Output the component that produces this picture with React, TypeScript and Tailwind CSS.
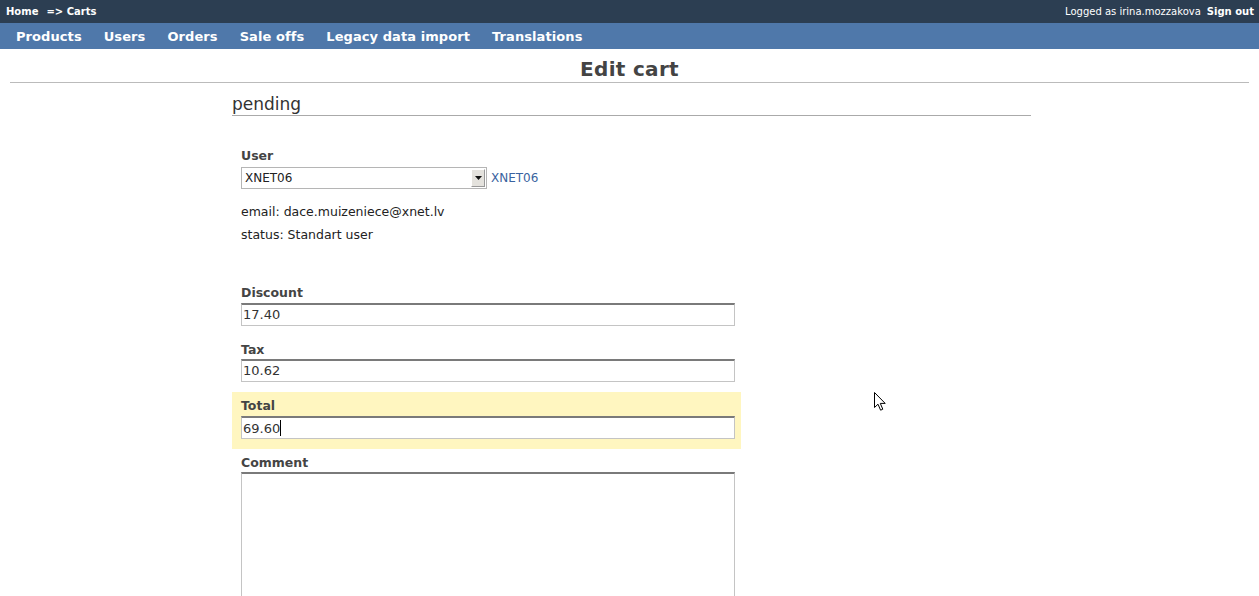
import React from "react";

const inputCls =
  "block w-[494px] h-[23px] bg-white border border-[#c4c4c4] border-t-2 border-t-[#7a7a7a] px-[1px] text-[13px] text-[#333] leading-[19px]";

const labelCls = "text-[12.5px] font-bold text-[#444] leading-[16px]";

export default function App() {
  return (
    <div
      className="relative w-[1259px] h-[596px] overflow-hidden bg-white text-[#333]"
      style={{ fontFamily: '"DejaVu Sans", Verdana, sans-serif' }}
    >
      {/* top bar */}
      <div className="h-[23px] bg-[#2c3e52] flex items-center justify-between pl-[6px] pr-[5px] pb-[1px] text-white text-[10px]">
        <div className="font-bold flex gap-[8px]">
          <span>Home</span>
          <span>=&gt; Carts</span>
        </div>
        <div className="flex gap-[6px]">
          <span>Logged as irina.mozzakova</span>
          <span className="font-bold">Sign out</span>
        </div>
      </div>
      {/* nav */}
      <div className="h-[26px] bg-[#4f78aa] flex items-center pl-[16px] pt-[2px] gap-[22px] text-white text-[13px] font-bold tracking-[0.08px]">
        <span>Products</span>
        <span>Users</span>
        <span>Orders</span>
        <span>Sale offs</span>
        <span>Legacy data import</span>
        <span>Translations</span>
      </div>
      {/* title */}
      <div className="mx-[10px] border-b border-[#bbbbbb] h-[34px] flex items-end justify-center pb-[1px]">
        <h1 className="text-[20px] font-bold text-[#444] leading-[24px] tracking-[0.3px]">Edit cart</h1>
      </div>
      <div className="ml-[232px] w-[799px]">
        <div className="border-b border-[#aaaaaa] h-[33px] flex items-end pb-[1px]">
          <span className="text-[17px] text-[#333] leading-[20px]">pending</span>
        </div>
        <div className="pl-[9px] pt-[32px]">
          <div className={labelCls}>User</div>
          <div className="flex items-center mt-[3px] gap-[4px]">
            <div className="w-[246px] h-[22px] border border-[#b5b5b5] bg-white flex items-center justify-between">
              <span className="text-[12px] text-[#222] pl-[3px]">XNET06</span>
              <span className="w-[14px] h-[18px] mr-[1px] bg-[#e4e2dd] border border-[#999] border-t-white border-l-white flex items-center justify-center">
                <svg width="7" height="4" viewBox="0 0 7 4">
                  <path d="M0 0H7L3.5 4Z" fill="#111" />
                </svg>
              </span>
            </div>
            <span className="text-[12px] text-[#3a63a0]">XNET06</span>
          </div>
          <div className="text-[12.5px] text-[#222] mt-[15px] leading-[16px]">email: dace.muizeniece@xnet.lv</div>
          <div className="text-[12.5px] text-[#222] mt-[7px] leading-[16px]">status: Standart user</div>

          <div className={"mt-[42px] " + labelCls}>Discount</div>
          <div className={"mt-[2px] " + inputCls}>17.40</div>

          <div className={"mt-[16px] " + labelCls}>Tax</div>
          <div className={"mt-[1px] " + inputCls}>10.62</div>
        </div>
        <div className="mt-[10px] w-[509px] bg-[#fff6c0] pl-[9px] pt-[6px] pb-[10px]">
          <div className={labelCls}>Total</div>
          <div className={"mt-[2px] flex items-center " + inputCls}>
            <span>69.60</span>
            <span className="inline-block w-[1px] h-[16px] bg-black" />
          </div>
        </div>
        <div className="pl-[9px] pt-[6px]">
          <div className={labelCls}>Comment</div>
          <div className="mt-[1px] w-[494px] h-[160px] bg-white border border-[#c4c4c4] border-t-2 border-t-[#7a7a7a]" />
        </div>
      </div>

      {/* mouse cursor */}
      <svg
        className="absolute left-[874px] top-[392px]"
        width="13"
        height="20"
        viewBox="0 0 13 20"
      >
        <path
          d="M0.5 0.5V15.5L4 12.2L6.6 18.2L8.8 17.2L6.3 11.4H11.2Z"
          fill="white"
          stroke="black"
          strokeWidth="1"
          strokeLinejoin="miter"
        />
      </svg>
    </div>
  );
}
